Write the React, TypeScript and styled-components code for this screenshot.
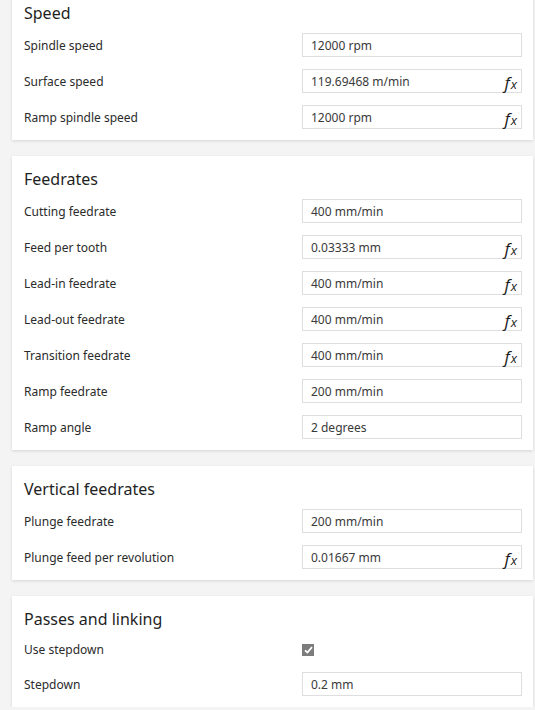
import styled, { createGlobalStyle } from "styled-components";

interface Field {
  label: string;
  value?: string;
  fx?: boolean;
  checkbox?: boolean;
}

interface Section {
  title: string;
  fields: Array<Field>;
}

const sections: Array<Section> = [
  {
    title: "Speed",
    fields: [
      { label: "Spindle speed", value: "12000 rpm" },
      { label: "Surface speed", value: "119.69468 m/min", fx: true },
      { label: "Ramp spindle speed", value: "12000 rpm", fx: true },
    ],
  },
  {
    title: "Feedrates",
    fields: [
      { label: "Cutting feedrate", value: "400 mm/min" },
      { label: "Feed per tooth", value: "0.03333 mm", fx: true },
      { label: "Lead-in feedrate", value: "400 mm/min", fx: true },
      { label: "Lead-out feedrate", value: "400 mm/min", fx: true },
      { label: "Transition feedrate", value: "400 mm/min", fx: true },
      { label: "Ramp feedrate", value: "200 mm/min" },
      { label: "Ramp angle", value: "2 degrees" },
    ],
  },
  {
    title: "Vertical feedrates",
    fields: [
      { label: "Plunge feedrate", value: "200 mm/min" },
      { label: "Plunge feed per revolution", value: "0.01667 mm", fx: true },
    ],
  },
  {
    title: "Passes and linking",
    fields: [
      { label: "Use stepdown", checkbox: true },
      { label: "Stepdown", value: "0.2 mm" },
    ],
  },
];

const GlobalStyle = createGlobalStyle`
  html, body {
    margin: 0;
    padding: 0;
    background: #f4f4f4;
    font-family: "Noto Sans", "Open Sans", sans-serif;
    overflow: hidden;
  }
`;

const Page = styled.div`
  display: flex;
  flex-direction: column;
  gap: 16px;
  padding: 0 2px 0 12px;
  margin-top: -10px;
`;

const Card = styled.section`
  background: #ffffff;
  box-shadow: 0 1px 3px rgba(0, 0, 0, 0.13);
  padding: 13px 11px 5px 12px;
`;

const Title = styled.h2`
  margin: 0 0 4px;
  font-size: 16px;
  line-height: 20px;
  font-weight: 400;
  color: #1f1f1f;
`;

const Row = styled.div<{ $short?: boolean }>`
  display: grid;
  grid-template-columns: 1fr 220px;
  align-items: center;
  height: ${(p) => (p.$short ? 33 : 36)}px;
`;

const Label = styled.span`
  font-size: 12px;
  color: #2b2b2b;
`;

const Input = styled.div`
  box-sizing: border-box;
  height: 24px;
  border: 1px solid #dedede;
  background: #fff;
  display: flex;
  align-items: center;
  justify-content: space-between;
  padding: 0 4px 0 8px;
  font-size: 12px;
  color: #3a3a3a;
`;

const Fx = styled.span`
  font-family: "Open Sans", "Noto Sans", sans-serif;
  font-style: italic;
  color: #1a1a1a;
  display: flex;
  align-items: baseline;
  margin-top: 2px;
  .f {
    font-size: 17px;
  }
  .x {
    font-size: 13px;
    margin-left: 1px;
  }
`;

const Check = styled.span`
  width: 12px;
  height: 12px;
  background: #7d7d7d;
  display: flex;
  align-items: center;
  justify-content: center;
  margin-top: 1px;
`;

export default function App() {
  return (
    <>
      <GlobalStyle />
      <Page>
        {sections.map((s) => (
          <Card key={s.title}>
            <Title>{s.title}</Title>
            {s.fields.map((f) => (
              <Row key={f.label} $short={f.checkbox}>
                <Label>{f.label}</Label>
                {f.checkbox ? (
                  <Check>
                    <svg width="9" height="8" viewBox="0 0 9 8">
                      <path
                        d="M1 4.3 L3.4 6.5 L8 1.2"
                        fill="none"
                        stroke="#fff"
                        strokeWidth="1.8"
                      />
                    </svg>
                  </Check>
                ) : (
                  <Input>
                    <span>{f.value}</span>
                    {f.fx && (
                      <Fx>
                        <span className="f">f</span>
                        <span className="x">x</span>
                      </Fx>
                    )}
                  </Input>
                )}
              </Row>
            ))}
          </Card>
        ))}
      </Page>
    </>
  );
}
